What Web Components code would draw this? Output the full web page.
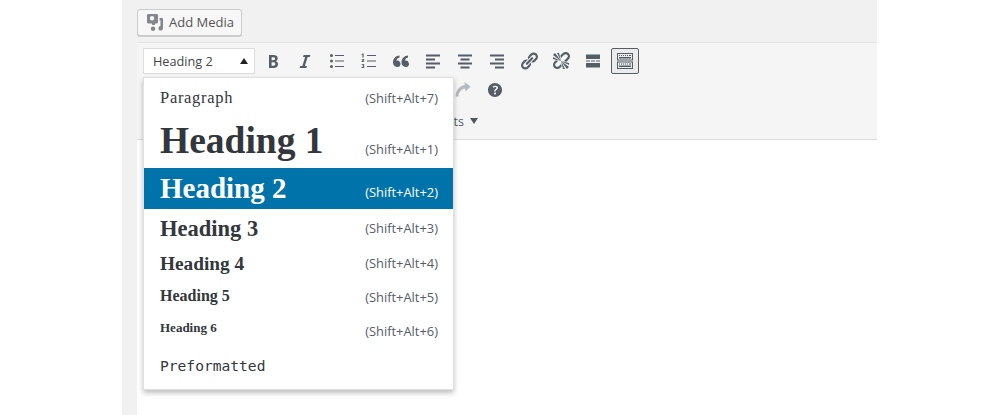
<!DOCTYPE html>
<html lang="en">
<head>
<meta charset="utf-8">
<title>Format menu</title>
<style>
  html, body { margin: 0; padding: 0; height: 100%; background: #fff; overflow: hidden; }
  body { font-family: "Open Sans", "Liberation Sans", sans-serif; }
</style>
</head>
<body>
<editor-shell>
  <media-button slot="media">Add Media</media-button>
  <editor-toolbar slot="toolbar">
    <format-select slot="row1">Heading 2</format-select>
    <tool-button slot="row1" icon="bold"></tool-button>
    <tool-button slot="row1" icon="italic"></tool-button>
    <tool-button slot="row1" icon="ul"></tool-button>
    <tool-button slot="row1" icon="ol"></tool-button>
    <tool-button slot="row1" icon="quote"></tool-button>
    <tool-button slot="row1" icon="left"></tool-button>
    <tool-button slot="row1" icon="center"></tool-button>
    <tool-button slot="row1" icon="right"></tool-button>
    <tool-button slot="row1" icon="link"></tool-button>
    <tool-button slot="row1" icon="unlink"></tool-button>
    <tool-button slot="row1" icon="more"></tool-button>
    <tool-button slot="row1" icon="sink" active></tool-button>
    <tool-button slot="row2" icon="redo" disabled></tool-button>
    <tool-button slot="row2" icon="help"></tool-button>
    <span slot="row3">Formats</span>
    <format-menu slot="menu">
      <format-item style="--row:40px;--size:16.5px;--weight:400;--shift:0px;--keys-shift:0px;--spacing:.7px" keys="(Shift+Alt+7)">Paragraph</format-item>
      <format-item style="--row:50px;--size:37.5px;--shift:-2px;--keys-shift:6px;--spacing:0px" keys="(Shift+Alt+1)">Heading 1</format-item>
      <format-item selected style="--row:41px;--size:29px;--shift:0px;--keys-shift:3px;--spacing:0px" keys="(Shift+Alt+2)">Heading 2</format-item>
      <format-item style="--row:38px;--size:22.5px;--shift:1px;--keys-shift:0px;--spacing:0px" keys="(Shift+Alt+3)">Heading 3</format-item>
      <format-item style="--row:33px;--size:19.3px;--shift:0px;--keys-shift:-1px;--spacing:0px" keys="(Shift+Alt+4)">Heading 4</format-item>
      <format-item style="--row:32px;--size:16px;--shift:0px;--keys-shift:1px;--spacing:0px" keys="(Shift+Alt+5)">Heading 5</format-item>
      <format-item style="--row:35px;--size:13px;--shift:-2.5px;--keys-shift:1px;--spacing:0px" keys="(Shift+Alt+6)">Heading 6</format-item>
      <format-item mono style="--row:42px;--size:14.6px;--weight:400;--shift:-2px;--spacing:0px" keys="">Preformatted</format-item>
    </format-menu>
  </editor-toolbar>
</editor-shell>

<script>
const ICONS = {
  bold: '<path d="M6 4v13h4.54c1.37 0 2.46-.33 3.26-1 .8-.66 1.2-1.58 1.2-2.77 0-.84-.17-1.51-.51-2.01s-.9-.85-1.67-1.03v-.09c.57-.1 1.02-.4 1.36-.9s.51-1.13.51-1.91c0-1.14-.39-1.98-1.17-2.5C12.75 4.26 11.5 4 9.78 4H6zm2.57 5.15V6.26h1.36c.73 0 1.27.11 1.61.32.34.22.51.58.51 1.07 0 .54-.16.92-.47 1.15s-.82.35-1.51.35h-1.5zm0 2.19h1.6c1.44 0 2.16.53 2.16 1.61 0 .6-.17 1.05-.51 1.34s-.86.43-1.57.43H8.57v-3.38z"/>',
  italic: '<path d="M14.78 6h-2.13l-2.8 9h2.12l-.62 2H4.6l.62-2h2.14l2.8-9H8.03l.62-2h6.75z"/>',
  ul: '<circle cx="4.5" cy="4.5" r="1.5"/><circle cx="4.5" cy="10" r="1.5"/><circle cx="4.5" cy="15.5" r="1.5"/><path d="M8 4h9v1H8zM8 9.5h9v1H8zM8 15h9v1H8z"/>',
  ol: '<path d="M8 4h9v1H8zM8 9.5h9v1H8zM8 15h9v1H8z"/><path d="M3.4 2.5h1.2v4H3.4V3.600l-.8.3v-.8zM2.600 8h2.600v.9L3.900 10.200h1.400v.8H2.500v-.8L4 8.800H2.600zM2.600 13h2.600v3.900H2.600v-.8h1.600v-.8H3v-.6h1.200v-.9H2.600z"/>',
  quote: '<path d="M9.5 13c0 1.700-1.300 3-3 3S2 14.500 2 11.500C2 7.500 5 4.700 8.500 4.500v2C6.800 6.900 5.700 8 5.400 9.700c.4-.2.800-.3 1.200-.3 1.700 0 2.900 1.800 2.900 3.600zM18 13c0 1.700-1.300 3-3 3s-4.500-1.500-4.500-4.500c0-4 3-6.800 6.500-7v2c-1.700.4-2.800 1.500-3.100 3.200.4-.2.800-.3 1.200-.3 1.700 0 2.900 1.800 2.900 3.600z"/>',
  left: '<path d="M3 3.500h14v2H3zM3 7.500h9v2H3zM3 11.500h14v2H3zM3 15.500h9v2H3z"/>',
  center: '<path d="M3 3.500h14v2H3zM5.500 7.500h9v2h-9zM3 11.500h14v2H3zM5.500 15.500h9v2h-9z"/>',
  right: '<path d="M3 3.500h14v2H3zM8 7.500h9v2H8zM3 11.500h14v2H3zM8 15.500h9v2H8z"/>',
  link: '<path d="M17.74 2.76c1.68 1.69 1.68 4.41 0 6.1l-1.53 1.52c-1.12 1.12-2.7 1.47-4.14 1.09l2.62-2.61.76-.77.76-.76c.84-.84.84-2.2 0-3.04-.84-.85-2.2-.85-3.04 0l-.77.76-3.38 3.38c-.37-1.44-.02-3.02 1.1-4.14l1.52-1.53c1.69-1.68 4.42-1.68 6.1 0zM8.59 13.43l5.34-5.34c.42-.42.42-1.1 0-1.52-.44-.43-1.13-.39-1.53 0l-5.33 5.34c-.42.42-.42 1.1 0 1.52.44.43 1.13.39 1.52 0zm-.76 2.29l4.14-4.15c.38 1.44.03 3.02-1.09 4.14l-1.52 1.53c-1.69 1.68-4.41 1.68-6.1 0-1.68-1.68-1.68-4.42 0-6.1l1.53-1.52c1.12-1.12 2.7-1.47 4.14-1.1l-4.14 4.15c-.85.84-.85 2.2 0 3.05.84.84 2.2.84 3.04 0z"/>',
  unlink: '<path d="M17.74 2.26c1.68 1.69 1.68 4.41 0 6.1l-1.53 1.52c-.32.33-.69.58-1.08.77L13 10l1.69-1.64.76-.77.76-.76c.84-.84.84-2.2 0-3.04-.84-.85-2.2-.85-3.04 0l-.77.76-.76.76L10 7l-.65-2.14c.19-.38.44-.75.77-1.07l1.52-1.53c1.69-1.68 4.42-1.68 6.1 0zM2 4l8 6-6-8zm4-2l4 8-2-8H6zM2 6l8 4-8-2V6zm7.36 7.69L10 13l.74 2.35-1.38 1.39c-1.69 1.68-4.41 1.68-6.1 0-1.68-1.68-1.68-4.42 0-6.1l1.39-1.38L7 10l-.69.64-1.52 1.53c-.85.84-.85 2.2 0 3.04.84.85 2.2.85 3.04 0zM18 16l-8-6 6 8zm-4 2l-4-8 2 8h2zm4-4l-8-4 8 2v2z"/>',
  more: '<path d="M3 3.500h14v4.500H3zM3 12h14v4.500H3zM3 9.500h4v1H3zM8 9.500h4v1H8zM13 9.500h4v1h-4z"/>',
  sink: '<path fill-rule="evenodd" d="M2 2h16v7.500H2zM3 3v5.500h14V3zM2 10.500h16V18H2zM3 11.500V17h14v-5.500z"/><path d="M4 4h1v1H4zM6 4h1v1H6zM8 4h1v1H8zM10 4h1v1h-1zM12 4h1v1h-1zM14 4h2v1h-2zM4 6h12v1.500H4zM4 12.500h1v1H4zM6 12.500h1v1H6zM8 12.500h1v1H8zM10 12.500h1v1h-1zM12 12.500h1v1h-1zM14 12.500h2v1h-2zM4 14.500h12V16H4z"/>',
  redo: '<path d="M17.500 6.500 11.500 2l.3 3.300C6.800 5.700 3 9.500 2.500 16.500h2.800c.6-4.800 3-7.500 6.800-8L12.500 11.500z"/>',
  help: '<path d="M17 10c0-3.870-3.140-7-7-7-3.870 0-7 3.130-7 7s3.130 7 7 7c3.860 0 7-3.130 7-7zm-6.300 1.480H9.140v-.43c0-.38.08-.7.24-.98s.46-.57.88-.89c.41-.29.68-.53.81-.71.14-.18.2-.39.2-.62 0-.25-.09-.44-.28-.58-.19-.13-.45-.19-.79-.19-.58 0-1.250.19-2 .57l-.64-1.280c.87-.49 1.800-.74 2.770-.74.81 0 1.450.2 1.920.58.48.39.71.91.71 1.550 0 .43-.09.8-.29 1.110-.19.32-.57.67-1.110 1.060-.38.28-.61.49-.71.63-.1.15-.15.34-.15.57v.35zm-1.470 2.740c-.18-.17-.27-.42-.27-.73 0-.33.08-.58.26-.75s.43-.25.77-.25c.32 0 .57.09.75.26s.27.42.27.74c0 .3-.09.55-.27.72-.18.18-.43.27-.75.27-.33 0-.58-.09-.76-.26z"/>'
};

class EditorShell extends HTMLElement {
  constructor() {
    super();
    this.attachShadow({ mode: 'open' });
    this.shadowRoot.innerHTML = `
      <style>
        :host { display: block; height: 415px; background: #fff; padding-left: 122px; box-sizing: border-box; }
        .wrap { width: 755px; height: 415px; box-sizing: border-box; padding-left: 15px; background: linear-gradient(#f1f1f1, #f1f1f1) left top / 15px 100% no-repeat, linear-gradient(#f1f1f1, #f1f1f1) left top / 100% 42px no-repeat, #fff; }
        .media { height: 42px; padding-top: 9px; box-sizing: border-box; }
      </style>
      <div class="wrap">
        <div class="media"><slot name="media"></slot></div>
        <slot name="toolbar"></slot>
      </div>
    `;
  }
}

class MediaButton extends HTMLElement {
  constructor() {
    super();
    this.attachShadow({ mode: 'open' });
    this.shadowRoot.innerHTML = `
      <style>
        :host { display: inline-flex; align-items: center; gap: 5px; width: 105px; height: 27px; box-sizing: border-box; padding: 0 0 2px 8px; background: #f7f7f7; border: 1px solid #cccccc; border-radius: 3px; box-shadow: 0 1px 0 #ccc; color: #555; font: 13px "Open Sans", sans-serif; }
        svg { width: 18px; height: 18px; fill: #82878c; flex: none; }
      </style>
      <svg viewBox="0 0 18 18"><path fill-rule="evenodd" d="M2.500 1h8C11.400 1 12 1.600 12 2.500V9c0 .9-.6 1.500-1.500 1.500H9.200l-.5 1.500H6.500L5.800 10.500H2.500C1.600 10.500 1 9.900 1 9V2.500C1 1.600 1.600 1 2.500 1zM6 3a2 2 0 1 0 0 4.400A2 2 0 0 0 6 3z"/><path d="M13.500 5h2.700c.5 0 .8.300.8.800v9.500a2.300 2.300 0 1 1-2.500-2.300V7.500h-1zM7 13.500a2.200 2.200 0 1 1 0 4.400 2.200 2.200 0 0 1 0-4.400z"/></svg>
      <span><slot></slot></span>
    `;
  }
}

class EditorToolbar extends HTMLElement {
  constructor() {
    super();
    this.attachShadow({ mode: 'open' });
    this.shadowRoot.innerHTML = `
      <style>
        :host { display: block; position: relative; height: 98px; box-sizing: border-box; background: #f5f5f5; border-top: 1px solid #e5e5e5; border-bottom: 1px solid #dedede; color: #555d66; }
        .row { display: flex; align-items: center; padding-left: 6px; }
        .row1 { height: 33px; gap: 4px; padding-top: 5px; box-sizing: border-box; align-items: flex-start; }
        .row2 { height: 28px; gap: 4px; padding-left: 312px; }
        .row3 { height: 34px; padding-left: 279px; gap: 6px; font: 12.5px "Open Sans", sans-serif; color: #555d66; }
        .caret { width: 0; height: 0; border: 4px solid transparent; border-top: 6px solid #50575e; border-bottom: 0; }
      </style>
      <div class="row row1"><slot name="row1"></slot></div>
      <div class="row row2"><slot name="row2"></slot></div>
      <div class="row row3"><slot name="row3"></slot><i class="caret"></i></div>
      <slot name="menu"></slot>
    `;
  }
}

class FormatSelect extends HTMLElement {
  constructor() {
    super();
    this.attachShadow({ mode: 'open' });
    this.shadowRoot.innerHTML = `
      <style>
        :host { display: flex; align-items: center; justify-content: space-between; width: 112px; height: 26px; box-sizing: border-box; padding: 0 6px 0 9px; background: #fff; border: 1px solid #dddddd; color: #444; font: 12.7px "Open Sans", sans-serif; }
        i { width: 0; height: 0; border: 4px solid transparent; border-bottom: 6px solid #222; border-top: 0; }
      </style>
      <span><slot></slot></span><i></i>
    `;
  }
}

class ToolButton extends HTMLElement {
  constructor() {
    super();
    this.attachShadow({ mode: 'open' });
    this.shadowRoot.innerHTML = `
      <style>
        :host { display: flex; align-items: center; justify-content: center; width: 28px; height: 26px; box-sizing: border-box; fill: #555d66; }
        :host([active]) { background: #ebebeb; border: 1px solid #555d66; border-radius: 2px; }
        :host([disabled]) { fill: #b4b9be; }
        svg { width: 20px; height: 20px; }
      </style>
      <svg viewBox="0 0 20 20">${ICONS[this.getAttribute('icon')] || ''}</svg>
    `;
  }
}

class FormatMenu extends HTMLElement {
  constructor() {
    super();
    this.attachShadow({ mode: 'open' });
    this.shadowRoot.innerHTML = `
      <style>
        :host { display: block; position: absolute; left: 6px; top: 34px; width: 311px; box-sizing: border-box; background: #fff; border: 1px solid #e0e0e0; box-shadow: 0 3px 5px rgba(0,0,0,.25); }
      </style>
      <slot></slot>
    `;
  }
}

class FormatItem extends HTMLElement {
  constructor() {
    super();
    this.attachShadow({ mode: 'open' });
    this.shadowRoot.innerHTML = `
      <style>
        :host { display: flex; align-items: center; justify-content: space-between; height: var(--row); box-sizing: border-box; padding: 0 15px 0 16px; color: #32373c; }
        :host([selected]) { background: #0073aa; color: #fff; }
        .label { font: var(--weight, 700) var(--size)/1 "Liberation Serif", serif; letter-spacing: var(--spacing); transform: translateY(var(--shift)); white-space: nowrap; }
        :host([mono]) .label { font-family: "DejaVu Sans Mono", monospace; }
        .keys { font: 12.9px "Open Sans", sans-serif; color: #555d66; transform: translateY(var(--keys-shift, 0)); }
        :host([selected]) .keys { color: #fff; }
      </style>
      <span class="label"><slot></slot></span>
      <span class="keys">${this.getAttribute('keys') || ''}</span>
    `;
  }
}

customElements.define('editor-shell', EditorShell);
customElements.define('media-button', MediaButton);
customElements.define('editor-toolbar', EditorToolbar);
customElements.define('format-select', FormatSelect);
customElements.define('tool-button', ToolButton);
customElements.define('format-menu', FormatMenu);
customElements.define('format-item', FormatItem);
</script>
</body>
</html>
